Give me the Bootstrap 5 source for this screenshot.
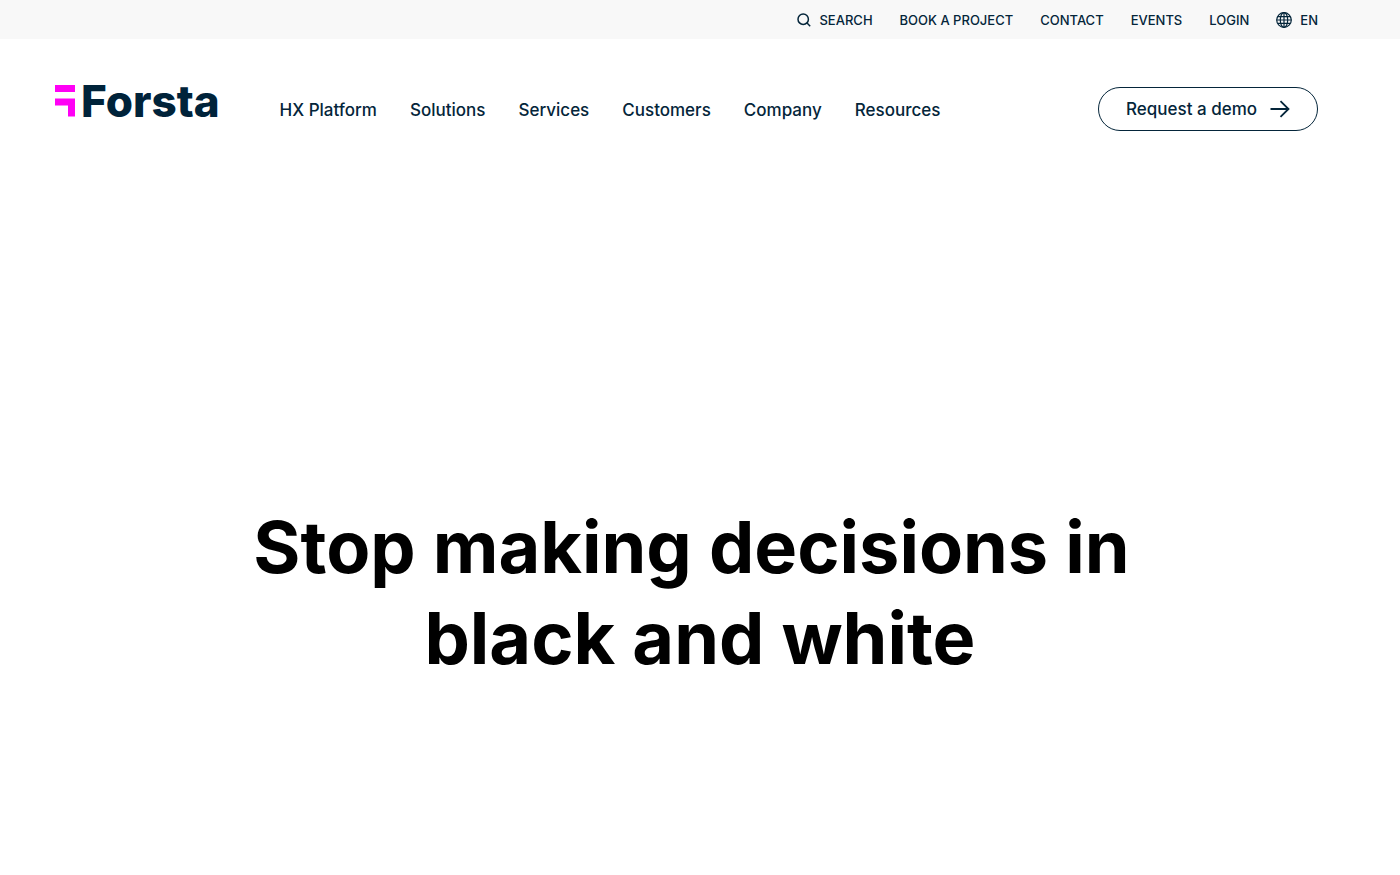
<!DOCTYPE html>
<html lang="en">
<head>
<meta charset="utf-8">
<meta name="viewport" content="width=device-width, initial-scale=1">
<title>Forsta</title>
<link href="https://cdn.jsdelivr.net/npm/bootstrap@5.3.0/dist/css/bootstrap.min.css" rel="stylesheet">
<style>
  :root { --navy: #04253a; --pink: #ff00f5; }
  body { font-family: Inter, "Liberation Sans", sans-serif; color: var(--navy); background: #fff; }
  .utility-bar { background: #f8f8f8; min-height: 39px; padding: 0 82px 0 55px; font-size: 13px; font-weight: 500; line-height: 20px; }
  .utility-links { column-gap: 27px; }
  .utility-bar a, .main-links a { color: var(--navy); text-decoration: none; }
  .site-header { padding: 46px 82px 40px 55px; }
  .brand-link { gap: 6px; color: #00233a; font-size: 44px; font-weight: 800; line-height: 32px; text-decoration: none; padding-bottom: 16px; margin-right: 60px; }
  .brand-link svg { fill: var(--pink); }
  .main-links { column-gap: 33px; padding-top: 2px; font-size: 17px; font-weight: 500; line-height: 24px; }
  .btn-demo { --bs-btn-color: var(--navy); --bs-btn-border-color: var(--navy); --bs-btn-hover-color: #fff; --bs-btn-hover-bg: var(--navy); --bs-btn-padding-x: 27px; --bs-btn-padding-y: 9px; --bs-btn-font-size: 17px; --bs-btn-font-weight: 500; --bs-btn-line-height: 24px; gap: 13px; }
  .hero { padding: 328px 24px 120px; }
  .hero-title { max-width: 920px; font-size: 72px; font-weight: 700; line-height: 91px; color: #000; }
  svg { flex: none; }
</style>
</head>
<body>
<div class="utility-bar d-flex align-items-center justify-content-end">
  <ul class="utility-links list-unstyled d-flex flex-wrap align-items-center mb-0">
    <li><a class="d-flex align-items-center gap-2" href="#search">
      <svg width="14" height="14" viewBox="0 0 14 14" fill="none" stroke="currentColor" stroke-width="1.5" aria-hidden="true"><circle cx="6.2" cy="6.2" r="5.2"/><path d="M9.8 9.8 13.2 13.2"/></svg>
      SEARCH</a></li>
    <li><a href="#book">BOOK A PROJECT</a></li>
    <li><a href="#contact">CONTACT</a></li>
    <li><a href="#events">EVENTS</a></li>
    <li><a href="#login">LOGIN</a></li>
    <li><a class="d-flex align-items-center gap-2" href="#language">
      <svg width="16" height="16" viewBox="0 0 16 16" fill="none" stroke="currentColor" stroke-width="1.2" aria-hidden="true"><circle cx="8" cy="8" r="7.3"/><ellipse cx="8" cy="8" rx="3.7" ry="7.3"/><path d="M8 .7v14.6M.7 8h14.6M1.800 4.700h12.400M1.800 11.300h12.400"/></svg>
      EN</a></li>
  </ul>
</div>

<header class="site-header d-flex flex-wrap align-items-center">
  <a class="brand-link d-flex align-items-center" href="#home">
    <svg width="20" height="32" viewBox="0 0 20 32" aria-hidden="true"><path d="M0 0h20v7H0zM0 13.500h20V31.500h-7V20.500H0z"/></svg>
    <span>Forsta</span>
  </a>
  <nav aria-label="Main">
    <ul class="main-links list-unstyled d-flex flex-wrap mb-0">
      <li><a href="#platform">HX Platform</a></li>
      <li><a href="#solutions">Solutions</a></li>
      <li><a href="#services">Services</a></li>
      <li><a href="#customers">Customers</a></li>
      <li><a href="#company">Company</a></li>
      <li><a href="#resources">Resources</a></li>
    </ul>
  </nav>
  <button type="button" class="btn btn-demo rounded-pill d-flex align-items-center ms-auto">
    Request a demo
    <svg width="20" height="18" viewBox="0 0 20 18" fill="none" stroke="currentColor" stroke-width="1.8" aria-hidden="true"><path d="M.5 9h18M10.5 1.200l8 7.800-8 7.800"/></svg>
  </button>
</header>

<main class="hero">
  <h1 class="hero-title text-center mx-auto mb-0">Stop making decisions in&nbsp;<br>black and white</h1>
</main>
<script src="https://cdn.jsdelivr.net/npm/bootstrap@5.3.0/dist/js/bootstrap.bundle.min.js"></script>
</body>
</html>
